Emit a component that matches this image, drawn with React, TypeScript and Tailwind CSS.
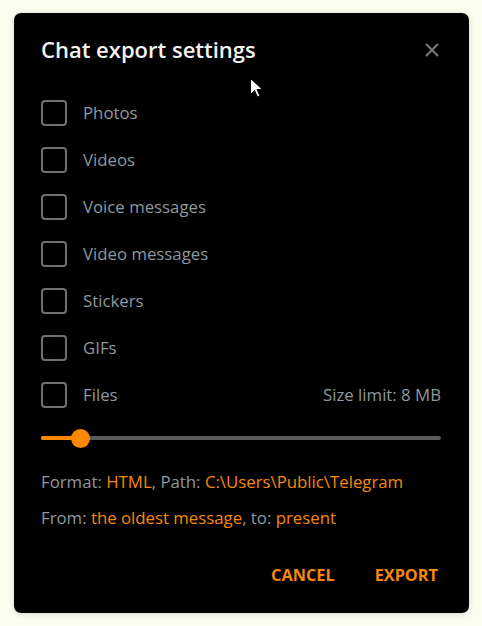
const options = ['Photos', 'Videos', 'Voice messages', 'Video messages', 'Stickers', 'GIFs', 'Files'];

function Checkbox() {
  return <div className="w-[26px] h-[26px] rounded-[4px] border-2 border-[#707070] shrink-0" />;
}

export default function App() {
  return (
    <div
      className="min-h-screen bg-[#fbfdef] pt-[13px] pl-[14px]"
      style={{ fontFamily: '"Open Sans", "Noto Sans", sans-serif' }}
    >
      <div className="relative w-[455px] h-[600px] bg-black rounded-[7px] shadow-[0_1px_6px_rgba(0,0,0,0.15)]">
        <div className="flex items-center justify-between pt-[22px] pl-[27px] pr-[30px] h-[50px]">
          <h1 className="text-[22px] leading-[28px] font-semibold text-[#f2f2f2]">Chat export settings</h1>
          <svg width="14" height="14" viewBox="0 0 14 14" className="text-[#7a7a7a] mt-[1px]">
            <path d="M1 1L13 13M13 1L1 13" stroke="currentColor" strokeWidth="2" />
          </svg>
        </div>

        <div className="mt-[26px] pl-[27px] pr-[28px]">
          {options.map((label) => (
            <div key={label} className="flex items-center h-[47px]">
              <Checkbox />
              <span className="ml-[16px] text-[16.8px] text-[#8e979f]">{label}</span>
              {label === 'Files' && (
                <span className="ml-auto text-[16.8px] text-[#8e979f]">Size limit: 8 MB</span>
              )}
            </div>
          ))}
        </div>

        <div className="mt-[10px] ml-[27px] w-[400px] h-[20px] relative flex items-center">
          <div className="w-full h-[4px] rounded-full bg-[#5a5a5a]" />
          <div className="absolute left-0 w-[39px] h-[4px] rounded-full bg-[#ff8800]" />
          <div className="absolute left-[30px] w-[19px] h-[19px] rounded-full bg-[#ff8800]" />
        </div>

        <div className="mt-[22px] pl-[27px] text-[16.8px] leading-[24px] text-[#8e979f]">
          <p>
            Format: <span className="text-[#f5880c]">HTML</span>, Path:{' '}
            <span className="text-[#f5880c]">C:\Users\Public\Telegram</span>
          </p>
          <p className="mt-[12px]">
            From: <span className="text-[#f5880c]">the oldest message</span>, to:{' '}
            <span className="text-[#f5880c]">present</span>
          </p>
        </div>

        <div className="mt-[33px] flex justify-end gap-[40px] pr-[31px] text-[16.3px] leading-[24px] font-bold text-[#f5880c]">
          <button>CANCEL</button>
          <button>EXPORT</button>
        </div>

        <svg className="absolute left-[236px] top-[65px]" width="13" height="20" viewBox="0 0 13 20">
          <path d="M0.5 0.5V16.5L4.5 12.5L7.5 19L10 18L7 11.5H12.5Z" fill="white" stroke="black" strokeWidth="1" />
        </svg>
      </div>
    </div>
  );
}
